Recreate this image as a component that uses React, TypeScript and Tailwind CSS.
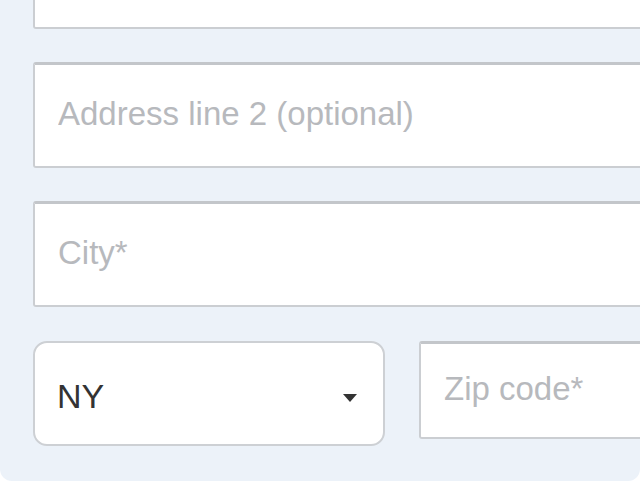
export default function App() {
  return (
    <div className="h-[484px] w-[640px] bg-white overflow-hidden" style={{ fontFamily: '"Liberation Sans", Arial, sans-serif' }}>

      {/* panel */}
      <div className="h-[481px] w-[640px] bg-[#ecf2f9] rounded-b-[12px] overflow-hidden pl-[33px] flex flex-col">

        {/* address line 1 (cut off above) */}
        <div className="h-[29px] w-[700px] shrink-0 bg-white border-2 border-t-0 border-[#cbced2] rounded-b-[3px]" />

        <input
          type="text"
          placeholder="Address line 2 (optional)"
          className="mt-[33px] h-[106px] w-[700px] shrink-0 bg-white border-2 border-[#cbced2] border-t-[3px] border-t-[#c3c6ca] rounded-[3px] pl-[23px] pb-[3px] text-[33px] text-[#333] placeholder:text-[#b7b9bd] outline-none"
        />

        <input
          type="text"
          placeholder="City*"
          className="mt-[33px] h-[106px] w-[700px] shrink-0 bg-white border-2 border-[#cbced2] border-t-[3px] border-t-[#c3c6ca] rounded-[3px] pl-[23px] pb-[3px] text-[33px] text-[#333] placeholder:text-[#b7b9bd] outline-none"
        />

        {/* state + zip */}
        <div className="mt-[34px] flex items-start gap-[34px]">

          <div className="h-[105px] w-[352px] shrink-0 bg-white border-2 border-[#cdd0d4] rounded-[14px] flex items-center justify-between pl-[22px] pr-[26px]">
            <span className="text-[34px] text-[#333] pt-[6px]">NY</span>
            <svg width="14" height="8" viewBox="0 0 14 8" className="mt-[8px]">
              <path d="M0 0 H14 L7 8 Z" fill="#333" />
            </svg>
          </div>

          <input
            type="text"
            placeholder="Zip code*"
            className="h-[98px] w-[300px] shrink-0 bg-white border-2 border-[#cbced2] border-t-[3px] border-t-[#c3c6ca] rounded-[3px] pl-[23px] pb-[3px] text-[33px] text-[#333] placeholder:text-[#b7b9bd] outline-none"
          />

        </div>

      </div>

    </div>
  );
}
